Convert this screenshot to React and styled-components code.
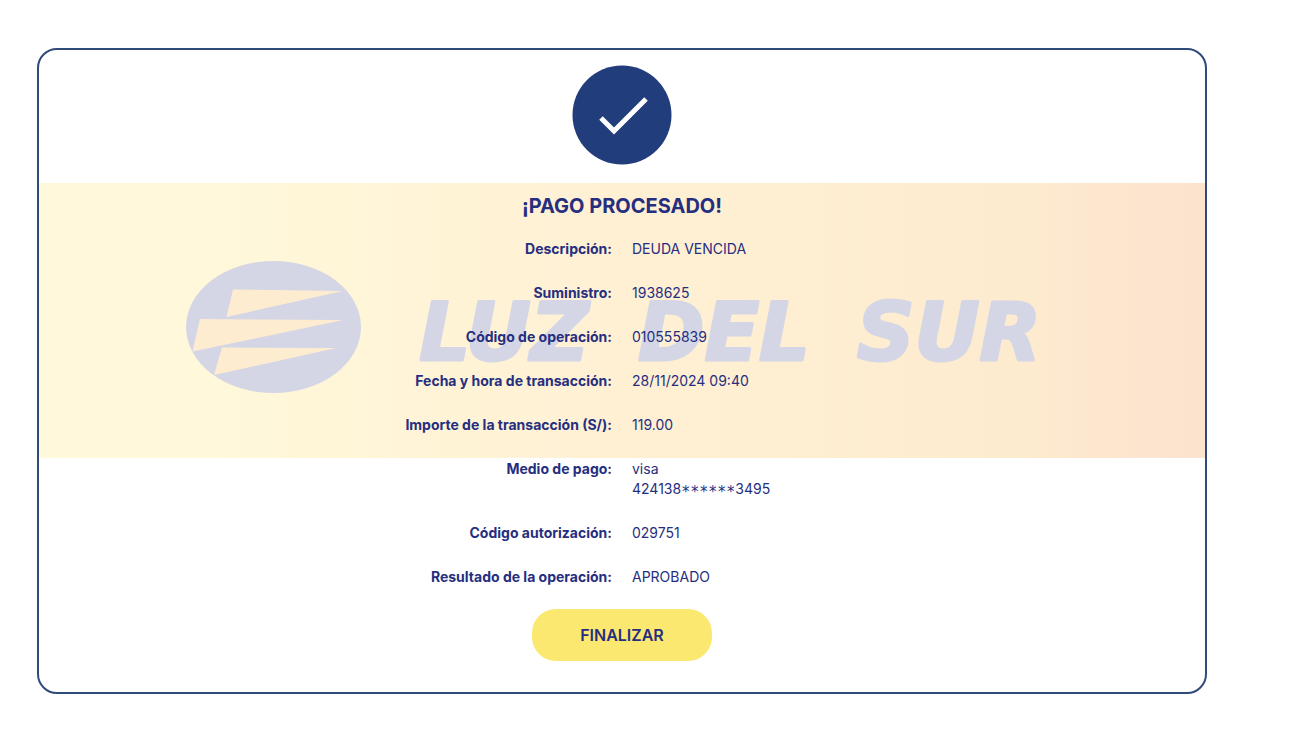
import React from "react";
import styled, { createGlobalStyle } from "styled-components";

const GlobalStyle = createGlobalStyle`
  *, *::before, *::after { box-sizing: border-box; }
  body {
    margin: 0;
    background: #ffffff;
    color: #262e80;
    font-family: Inter, "Liberation Sans", sans-serif;
    font-size: 14px;
    line-height: 20px;
  }
`;

const Page = styled.main`
  padding: 48px 105px 48px 37px;
`;

const Card = styled.section`
  display: flex;
  flex-direction: column;
  align-items: stretch;
  gap: 18px;
  padding: 15px 0 31px;
  border: 2px solid #304b79;
  border-radius: 20px;
  overflow: hidden;
`;

const StatusIcon = styled.svg`
  display: block;
  width: 100px;
  height: 100px;
  margin: 0 auto;
`;

const Receipt = styled.div`
  position: relative;
  display: flex;
  flex-direction: column;
  align-items: center;
  padding-top: 10px;
`;

const Watermark = styled.svg`
  position: absolute;
  top: 0;
  left: 0;
  z-index: -1;
  display: block;
  width: 100%;
  height: auto;
`;

const Wordmark = styled.text`
  font-family: "DejaVu Sans", sans-serif;
  font-size: 80px;
  font-weight: 700;
  font-style: italic;
  text-anchor: middle;
  stroke: #d4d6e6;
  stroke-width: 3px;
  stroke-linejoin: round;
`;

const Title = styled.h1`
  margin: 0 0 20px;
  font-size: 20px;
  line-height: 26px;
  font-weight: 700;
`;

const Details = styled.dl`
  display: flex;
  flex-direction: column;
  gap: 24px;
  width: 100%;
  margin: 0 0 22px;
`;

const Row = styled.div`
  display: grid;
  grid-template-columns: 1fr 1fr;
  column-gap: 20px;
`;

const Label = styled.dt`
  text-align: right;
  font-weight: 700;
`;

const Value = styled.dd`
  margin: 0;
  font-weight: 400;
`;

const Mask = styled.span`
  font-family: "DejaVu Sans Mono", monospace;
  font-size: 15px;
  line-height: 0;
  vertical-align: -3px;
`;

const FinishButton = styled.button`
  width: 180px;
  height: 52px;
  padding: 0;
  border: 0;
  border-radius: 24px;
  background: #fbe870;
  color: inherit;
  font: inherit;
  font-size: 16px;
  font-weight: 600;
  cursor: pointer;
`;

const details = [
  ["Descripción:", "DEUDA VENCIDA"],
  ["Suministro:", "1938625"],
  ["Código de operación:", "010555839"],
  ["Fecha y hora de transacción:", "28/11/2024 09:40"],
  ["Importe de la transacción (S/):", "119.00"],
  [
    "Medio de pago:",
    <>
      visa
      <br />
      424138<Mask>******</Mask>3495
    </>,
  ],
  ["Código autorización:", "029751"],
  ["Resultado de la operación:", "APROBADO"],
];

function BrandWatermark() {
  return (
    <Watermark viewBox="0 0 1166 275" aria-hidden="true">
      <defs>
        <linearGradient id="band" x1="0" x2="1" y1="0" y2="0">
          <stop offset="0" stopColor="#fff9db" />
          <stop offset="0.15" stopColor="#fff8da" />
          <stop offset="0.5" stopColor="#fff0d4" />
          <stop offset="0.84" stopColor="#fdebcf" />
          <stop offset="0.96" stopColor="#fce4ce" />
          <stop offset="1" stopColor="#fce3ce" />
        </linearGradient>
      </defs>
      <rect width="1166" height="275" fill="url(#band)" />
      <ellipse cx="234.5" cy="144" rx="87.5" ry="66" fill="#d4d6e6" />
      <g fill="#fdeccf">
        <path d="M194 106.500L304 108L187.500 134Z" />
        <path d="M161 136L304 137L153.500 168.500Z" />
        <path d="M183 164.500L297 165L175 192Z" />
      </g>
      <g fill="#d4d6e6">
        <Wordmark x="465" y="177">LUZ</Wordmark>
        <Wordmark x="685" y="177">DEL</Wordmark>
        <Wordmark x="910" y="177">SUR</Wordmark>
      </g>
    </Watermark>
  );
}

export default function App() {
  return (
    <>
      <GlobalStyle />
      <Page>
        <Card>
          <StatusIcon viewBox="0 0 100 100" aria-hidden="true">
            <circle cx="50" cy="50" r="49.500" fill="#213d7b" />
            <path d="M29 53L42 66L74 34" fill="none" stroke="#ffffff" strokeWidth="5" />
          </StatusIcon>
          <Receipt>
            <BrandWatermark />
            <Title>¡PAGO PROCESADO!</Title>
            <Details>
              {details.map(([label, value]) => (
                <Row key={label}>
                  <Label>{label}</Label>
                  <Value>{value}</Value>
                </Row>
              ))}
            </Details>
            <FinishButton type="button">FINALIZAR</FinishButton>
          </Receipt>
        </Card>
      </Page>
    </>
  );
}
